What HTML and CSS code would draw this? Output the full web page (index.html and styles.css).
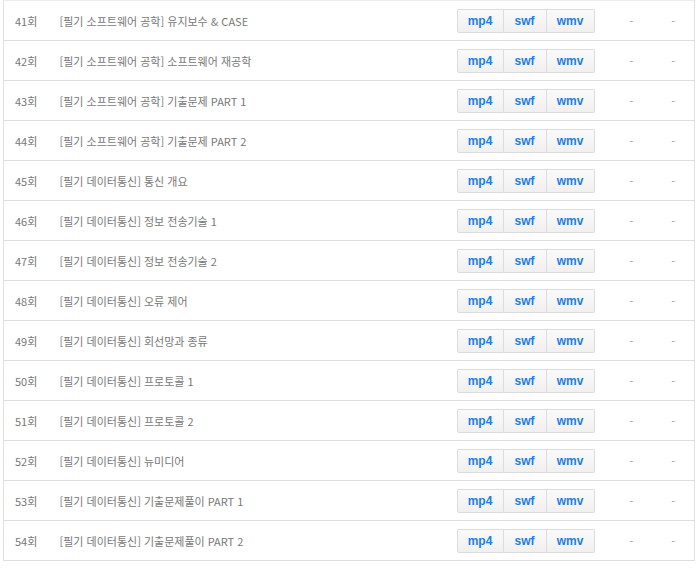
FILE: index.html
```html
<!DOCTYPE html>
<html lang="ko">
<head>
  <meta charset="UTF-8">
  <title>강의 목록</title>
  <link rel="stylesheet" href="styles.css">
</head>
<body>
  <div class="list-wrap">
    <table class="lecture-table">
      <colgroup>
        <col class="col-no">
        <col class="col-title">
        <col class="col-files">
        <col class="col-dash">
        <col class="col-dash">
      </colgroup>
      <tbody id="rows"></tbody>
    </table>
  </div>

  <script>
    // 강의 목록
    const lectures = [
      [41, '[필기 소프트웨어 공학] 유지보수 & CASE'],
      [42, '[필기 소프트웨어 공학] 소프트웨어 재공학'],
      [43, '[필기 소프트웨어 공학] 기출문제 PART 1'],
      [44, '[필기 소프트웨어 공학] 기출문제 PART 2'],
      [45, '[필기 데이터통신] 통신 개요'],
      [46, '[필기 데이터통신] 정보 전송기술 1'],
      [47, '[필기 데이터통신] 정보 전송기술 2'],
      [48, '[필기 데이터통신] 오류 제어'],
      [49, '[필기 데이터통신] 회선망과 종류'],
      [50, '[필기 데이터통신] 프로토콜 1'],
      [51, '[필기 데이터통신] 프로토콜 2'],
      [52, '[필기 데이터통신] 뉴미디어'],
      [53, '[필기 데이터통신] 기출문제풀이 PART 1'],
      [54, '[필기 데이터통신] 기출문제풀이 PART 2']
    ];

    const tbody = document.getElementById('rows');
    lectures.forEach(([no, title]) => {
      const tr = document.createElement('tr');
      tr.innerHTML =
        '<td class="no">' + no + '회</td>' +
        '<td class="title">' + title.replace('&', '&amp;') + '</td>' +
        '<td class="files"><div class="btn-group">' +
          '<a class="btn">mp4</a><a class="btn">swf</a><a class="btn">wmv</a>' +
        '</div></td>' +
        '<td class="dash">-</td>' +
        '<td class="dash">-</td>';
      tbody.appendChild(tr);
    });
  </script>
</body>
</html>
```

FILE: styles.css
```css
* {
  margin: 0;
  padding: 0;
  box-sizing: border-box;
}

body {
  font-family: "Noto Sans CJK KR", "Noto Sans", sans-serif;
  background: #fff;
  color: #777;
}

.list-wrap {
  padding-left: 3px;
}

.lecture-table {
  width: 692px;
  border-collapse: collapse;
  table-layout: fixed;
  border: 1px solid #e0e0e0;
  border-top-color: #ececec;
}

.col-no {
  width: 45px;
}

.col-files {
  width: 164px;
}

.col-dash {
  width: 42px;
}

.lecture-table td {
  height: 40px;
  border-bottom: 1px solid #dedede;
  font-size: 11px;
  vertical-align: middle;
  white-space: nowrap;
}

.no {
  padding-left: 11px;
}

.title {
  padding-left: 11px;
}

.files {
  padding-left: 10px;
}

.dash {
  text-align: center;
  color: #999;
}

.btn-group {
  display: flex;
  height: 24px;
  width: 138px;
}

.btn {
  display: flex;
  align-items: center;
  justify-content: center;
  border: 1px solid #dcdcdc;
  background: linear-gradient(#fafafa, #f0f0f0);
  color: #1c7fe3;
  font-family: "Liberation Sans", Arial, sans-serif;
  font-weight: bold;
  font-size: 12px;
  cursor: pointer;
}

.btn + .btn {
  border-left: none;
}

.btn:nth-child(1) {
  width: 47px;
  border-radius: 2px 0 0 2px;
}

.btn:nth-child(2) {
  width: 43px;
}

.btn:nth-child(3) {
  width: 48px;
  border-radius: 0 2px 2px 0;
}
```
